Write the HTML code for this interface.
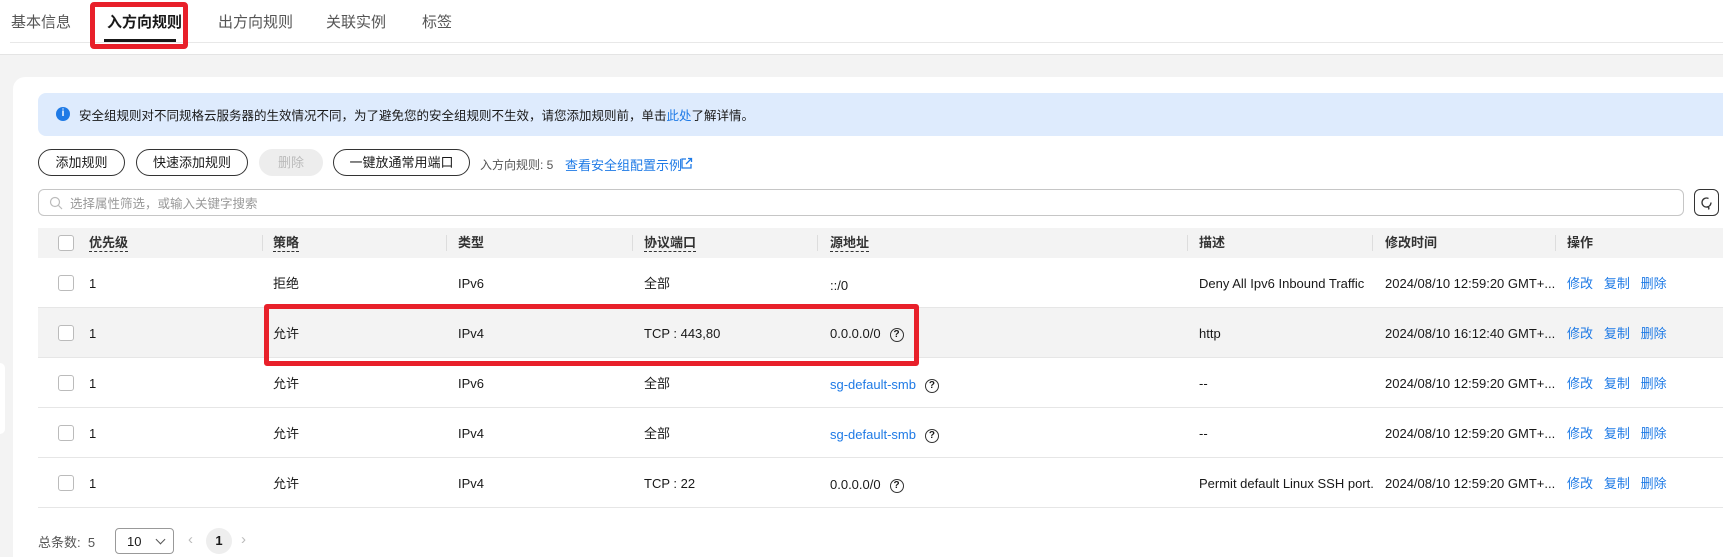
<!DOCTYPE html><html><head><meta charset="utf-8"><style>
*{box-sizing:border-box;margin:0;padding:0}
body{width:1723px;height:546px;overflow:hidden;background:#f3f3f3;font-family:"Liberation Sans","Noto Sans CJK SC",sans-serif;color:#191919;position:relative;font-size:13px}
.a{position:absolute;white-space:nowrap}
.top{position:absolute;left:0;top:0;width:1723px;height:55px;background:#fff;border-bottom:1px solid #e4e4e4}
.tab{position:absolute;top:11px;font-size:15px;color:#555}
.card{position:absolute;left:13px;top:77px;width:1720px;height:480px;background:#fff;border-radius:12px 0 0 0}
.btn{position:absolute;top:149px;height:27px;border:1px solid #333;border-radius:14px;text-align:center;line-height:25px;font-size:13px;background:#fff}
.hd{position:absolute;top:228px;left:38px;width:1685px;height:30px;background:#f3f3f3}
.row{position:absolute;left:38px;width:1685px;height:50px;border-bottom:1px solid #e6e6e6}
.cb{position:absolute;left:20px;width:16px;height:16px;border:1px solid #bbb;border-radius:3px;background:#fff}
.sep{position:absolute;top:235px;width:1px;height:16px;background:#ddd}
.h{position:absolute;top:232px;font-weight:bold;color:#333;font-size:13px}
.u{border-bottom:1px dashed #333;padding-bottom:1px}
.blue{color:#1e7ae6}
.q{display:inline-block;width:14px;height:14px;border:1.3px solid #333;border-radius:50%;font-size:10px;line-height:12px;text-align:center;font-weight:bold;margin-left:9px;vertical-align:middle}
</style></head><body>
<div class="top">
<div class="tab" style="left:11px">基本信息</div>
<div class="tab" style="left:107px;color:#191919;font-weight:bold">入方向规则</div>
<div class="tab" style="left:218px">出方向规则</div>
<div class="tab" style="left:326px">关联实例</div>
<div class="tab" style="left:422px">标签</div>
<div class="a" style="left:10px;top:42px;width:1713px;height:1px;background:#e8e8e8"></div>
<div class="a" style="left:104px;top:39px;width:72px;height:3px;background:#191919"></div>
</div>
<div class="a" style="left:90px;top:2px;width:98px;height:47px;border:5px solid #e8202a;border-radius:4px"></div>
<div class="a" style="left:0;top:363px;width:5px;height:71px;background:#fff;border-radius:0 6px 6px 0"></div>
<div class="card"></div>
<div class="a" style="left:38px;top:93px;width:1685px;height:43px;background:#deebfd;border-radius:8px 0 0 8px"></div>
<div class="a" style="left:56px;top:107px;width:14px;height:14px;border-radius:50%;background:#1e7ae6;color:#fff;font-size:10px;font-weight:bold;text-align:center;line-height:14px">i</div>
<div class="a" style="left:79px;top:105px;font-size:12.5px">安全组规则对不同规格云服务器的生效情况不同，为了避免您的安全组规则不生效，请您添加规则前，单击<span class="blue">此处</span>了解详情。</div>
<div class="btn" style="left:38px;width:87px">添加规则</div>
<div class="btn" style="left:136px;width:112px">快速添加规则</div>
<div class="btn" style="left:259px;width:64px;background:#ededed;border-color:#ededed;color:#bbb">删除</div>
<div class="btn" style="left:333px;width:137px">一键放通常用端口</div>
<div class="a" style="left:480px;top:156px;font-size:12px;color:#555">入方向规则: 5</div>
<div class="a blue" style="left:565px;top:155px;font-size:13px">查看安全组配置示例</div>
<svg class="a" style="left:680px;top:157px" width="13" height="13" viewBox="0 0 13 13" fill="none" stroke="#1e7ae6" stroke-width="1.3"><path d="M6 2H2v9h9V7M8 1.5h3.5V5M11.5 1.5L6 7"/></svg>
<div class="a" style="left:38px;top:189px;width:1646px;height:27px;border:1px solid #c6c6c6;border-radius:6px"></div>
<svg class="a" style="left:49px;top:196px" width="14" height="14" viewBox="0 0 14 14" fill="none" stroke="#bbb" stroke-width="1.2"><circle cx="6" cy="6" r="4.5"/><path d="M9.5 9.5L13 13"/></svg>
<div class="a" style="left:70px;top:193px;font-size:12.5px;color:#999">选择属性筛选，或输入关键字搜索</div>
<div class="a" style="left:1694px;top:189px;width:25px;height:27px;border:1px solid #333;border-radius:6px"></div>
<svg class="a" style="left:1699px;top:195px" width="15" height="15" viewBox="0 0 15 15" fill="none" stroke="#333" stroke-width="1.3"><path d="M12 7.5A4.5 4.5 0 1 1 9.5 3.5M8 11.5l2 1.5-.5 1.5"/></svg>
<div class="hd"><div class="cb" style="top:7px"></div></div>
<div class="h" style="left:89px"><span class="u">优先级</span></div>
<div class="sep" style="left:262px"></div><div class="h" style="left:273px"><span class="u">策略</span></div>
<div class="sep" style="left:446px"></div><div class="h" style="left:458px">类型</div>
<div class="sep" style="left:632px"></div><div class="h" style="left:644px"><span class="u">协议端口</span></div>
<div class="sep" style="left:817px"></div><div class="h" style="left:830px"><span class="u">源地址</span></div>
<div class="sep" style="left:1187px"></div><div class="h" style="left:1199px">描述</div>
<div class="sep" style="left:1372px"></div><div class="h" style="left:1385px">修改时间</div>
<div class="sep" style="left:1555px"></div><div class="h" style="left:1567px">操作</div>

<div class="row" style="top:258px"><div class="cb" style="top:17px"></div></div>
<div class="row" style="top:308px;background:#f3f3f3"><div class="cb" style="top:17px"></div></div>
<div class="row" style="top:358px"><div class="cb" style="top:17px"></div></div>
<div class="row" style="top:408px"><div class="cb" style="top:17px"></div></div>
<div class="row" style="top:458px"><div class="cb" style="top:17px"></div></div>

<div class="a" style="top:276px;left:89px">1</div><div class="a" style="top:273px;left:273px">拒绝</div><div class="a" style="top:276px;left:458px">IPv6</div><div class="a" style="top:273px;left:644px">全部</div><div class="a" style="top:278px;left:830px">::/0</div><div class="a" style="top:276px;left:1199px">Deny All Ipv6 Inbound Traffic</div><div class="a" style="top:276px;left:1385px">2024/08/10 12:59:20 GMT+...</div><div class="a blue" style="top:273px;left:1567px">修改&nbsp;&nbsp;&nbsp;复制&nbsp;&nbsp;&nbsp;删除</div>

<div class="a" style="top:326px;left:89px">1</div><div class="a" style="top:323px;left:273px">允许</div><div class="a" style="top:326px;left:458px">IPv4</div><div class="a" style="top:326px;left:644px">TCP : 443,80</div><div class="a" style="top:326px;left:830px">0.0.0.0/0<span class="q">?</span></div><div class="a" style="top:326px;left:1199px">http</div><div class="a" style="top:326px;left:1385px">2024/08/10 16:12:40 GMT+...</div><div class="a blue" style="top:323px;left:1567px">修改&nbsp;&nbsp;&nbsp;复制&nbsp;&nbsp;&nbsp;删除</div>

<div class="a" style="top:376px;left:89px">1</div><div class="a" style="top:373px;left:273px">允许</div><div class="a" style="top:376px;left:458px">IPv6</div><div class="a" style="top:373px;left:644px">全部</div><div class="a" style="top:377px;left:830px"><span class="blue">sg-default-smb</span><span class="q">?</span></div><div class="a" style="top:376px;left:1199px">--</div><div class="a" style="top:376px;left:1385px">2024/08/10 12:59:20 GMT+...</div><div class="a blue" style="top:373px;left:1567px">修改&nbsp;&nbsp;&nbsp;复制&nbsp;&nbsp;&nbsp;删除</div>

<div class="a" style="top:426px;left:89px">1</div><div class="a" style="top:423px;left:273px">允许</div><div class="a" style="top:426px;left:458px">IPv4</div><div class="a" style="top:423px;left:644px">全部</div><div class="a" style="top:427px;left:830px"><span class="blue">sg-default-smb</span><span class="q">?</span></div><div class="a" style="top:426px;left:1199px">--</div><div class="a" style="top:426px;left:1385px">2024/08/10 12:59:20 GMT+...</div><div class="a blue" style="top:423px;left:1567px">修改&nbsp;&nbsp;&nbsp;复制&nbsp;&nbsp;&nbsp;删除</div>

<div class="a" style="top:476px;left:89px">1</div><div class="a" style="top:473px;left:273px">允许</div><div class="a" style="top:476px;left:458px">IPv4</div><div class="a" style="top:476px;left:644px">TCP : 22</div><div class="a" style="top:477px;left:830px">0.0.0.0/0<span class="q">?</span></div><div class="a" style="top:476px;left:1199px">Permit default Linux SSH port.</div><div class="a" style="top:476px;left:1385px">2024/08/10 12:59:20 GMT+...</div><div class="a blue" style="top:473px;left:1567px">修改&nbsp;&nbsp;&nbsp;复制&nbsp;&nbsp;&nbsp;删除</div>

<div class="a" style="left:264px;top:304px;width:655px;height:62px;border:5px solid #e8202a;border-radius:3px"></div>

<div class="a" style="left:38px;top:532px;color:#555">总条数:&nbsp; 5</div>
<div class="a" style="left:115px;top:528px;width:59px;height:26px;border:1px solid #999;border-radius:4px;padding:5px 11px">10 <span style="display:inline-block;width:7px;height:7px;border-right:1.3px solid #555;border-bottom:1.3px solid #555;transform:rotate(45deg);margin:0 0 3px 12px"></span></div>
<div class="a" style="left:188px;top:531px;color:#bbb;font-size:15px">‹</div>
<div class="a" style="left:206px;top:528px;width:26px;height:26px;border-radius:50%;background:#eee;text-align:center;line-height:26px;font-weight:bold">1</div>
<div class="a" style="left:241px;top:531px;color:#bbb;font-size:15px">›</div>
</body></html>
